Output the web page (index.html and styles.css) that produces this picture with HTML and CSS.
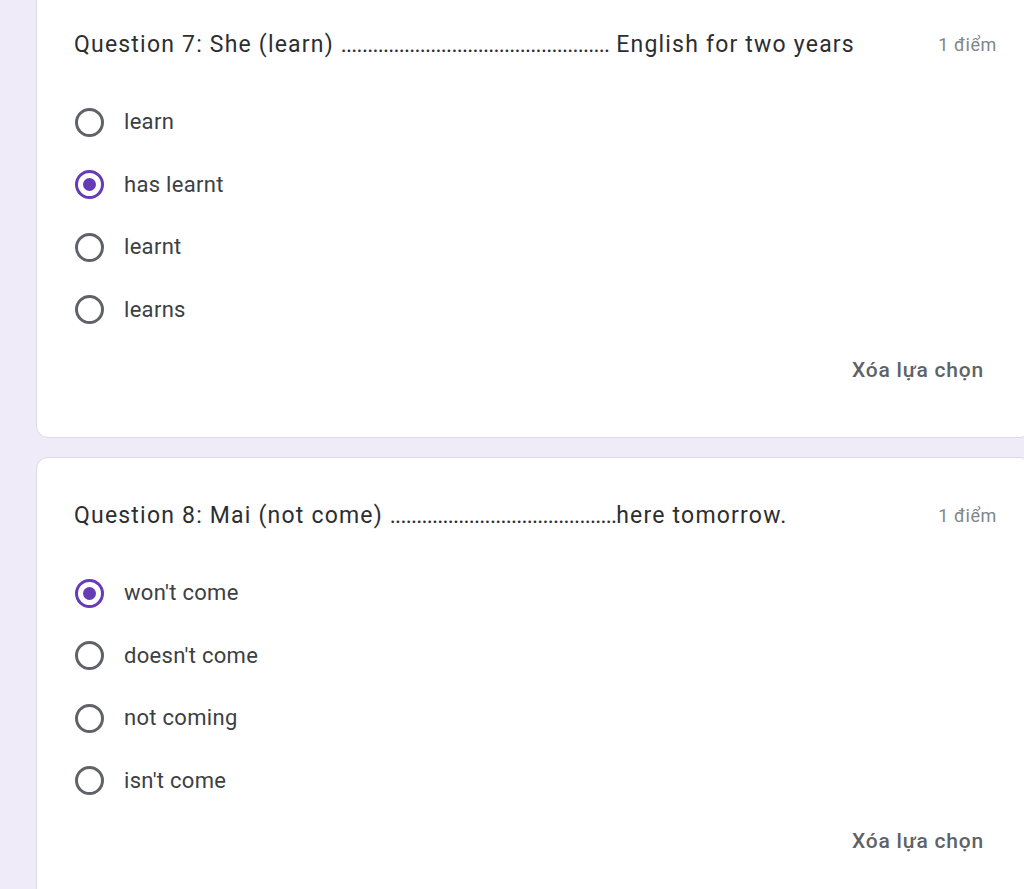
FILE: index.html
```html
<!DOCTYPE html>
<html lang="vi">
<head>
<meta charset="utf-8">
<title>Form</title>
<link rel="stylesheet" href="styles.css">
</head>
<body>
<div class="page">
  <div class="card card-first">
    <div class="q-head">
      <div class="q-title">Question 7: She (learn) <span class="dots">...................................................</span> English for two years</div>
      <div class="q-points">1 điểm</div>
    </div>
    <div class="options">
      <div class="option"><span class="radio"></span><span class="label">learn</span></div>
      <div class="option"><span class="radio checked"></span><span class="label">has learnt</span></div>
      <div class="option"><span class="radio"></span><span class="label">learnt</span></div>
      <div class="option"><span class="radio"></span><span class="label">learns</span></div>
    </div>
    <div class="clear-row"><span class="clear">Xóa lựa chọn</span></div>
  </div>
  <div class="card">
    <div class="q-head">
      <div class="q-title">Question 8: Mai (not come) <span class="dots">...........................................</span>here tomorrow.</div>
      <div class="q-points">1 điểm</div>
    </div>
    <div class="options">
      <div class="option"><span class="radio checked"></span><span class="label">won't come</span></div>
      <div class="option"><span class="radio"></span><span class="label">doesn't come</span></div>
      <div class="option"><span class="radio"></span><span class="label">not coming</span></div>
      <div class="option"><span class="radio"></span><span class="label">isn't come</span></div>
    </div>
    <div class="clear-row"><span class="clear">Xóa lựa chọn</span></div>
  </div>
</div>
</body>
</html>
```
FILE: styles.css
```css
html, body {
  margin: 0;
  padding: 0;
  overflow: hidden;
  height: 100%;
}
body {
  background: #f0ebf8;
  font-family: Roboto, "Liberation Sans", Arial, sans-serif;
}
.page {
  padding-left: 36px;
  display: flex;
  flex-direction: column;
  gap: 19px;
  margin-top: -14px;
}
.card {
  width: 996px;
  box-sizing: border-box;
  background: #ffffff;
  border: 1px solid #dadce0;
  border-radius: 12px;
  padding: 42px 34px 47px 37px;
}
.q-head {
  display: flex;
  justify-content: space-between;
  align-items: center;
  height: 32px;
}
.q-title {
  font-size: 23px;
  line-height: 32px;
  color: #2d2e30;
  letter-spacing: 1.2px;
  white-space: nowrap;
}
.dots {
  letter-spacing: -0.8px;
}
.q-points {
  font-size: 18px;
  color: #80868b;
  line-height: 32px;
  letter-spacing: 0.6px;
}
.options {
  margin-top: 30px;
  display: flex;
  flex-direction: column;
}
.option {
  height: 62.5px;
  display: flex;
  align-items: center;
  gap: 20px;
}
.radio {
  width: 29px;
  height: 29px;
  box-sizing: border-box;
  border: 3px solid #5f6368;
  border-radius: 50%;
  position: relative;
  flex: none;
  margin-left: 1px;
}
.radio.checked {
  border-color: #673ab7;
}
.radio.checked::after {
  content: "";
  position: absolute;
  left: 50%;
  top: 50%;
  width: 13px;
  height: 13px;
  margin: -6.5px 0 0 -6.5px;
  border-radius: 50%;
  background: #673ab7;
}
.label {
  font-size: 22px;
  color: #3c4043;
  line-height: 28px;
  letter-spacing: 0.3px;
}
.clear-row {
  display: flex;
  justify-content: flex-end;
  margin-top: 9px;
  padding-right: 13px;
}
.clear {
  font-size: 21px;
  line-height: 40px;
  color: #5f6368;
  font-weight: 500;
  letter-spacing: 0.8px;
}
```
